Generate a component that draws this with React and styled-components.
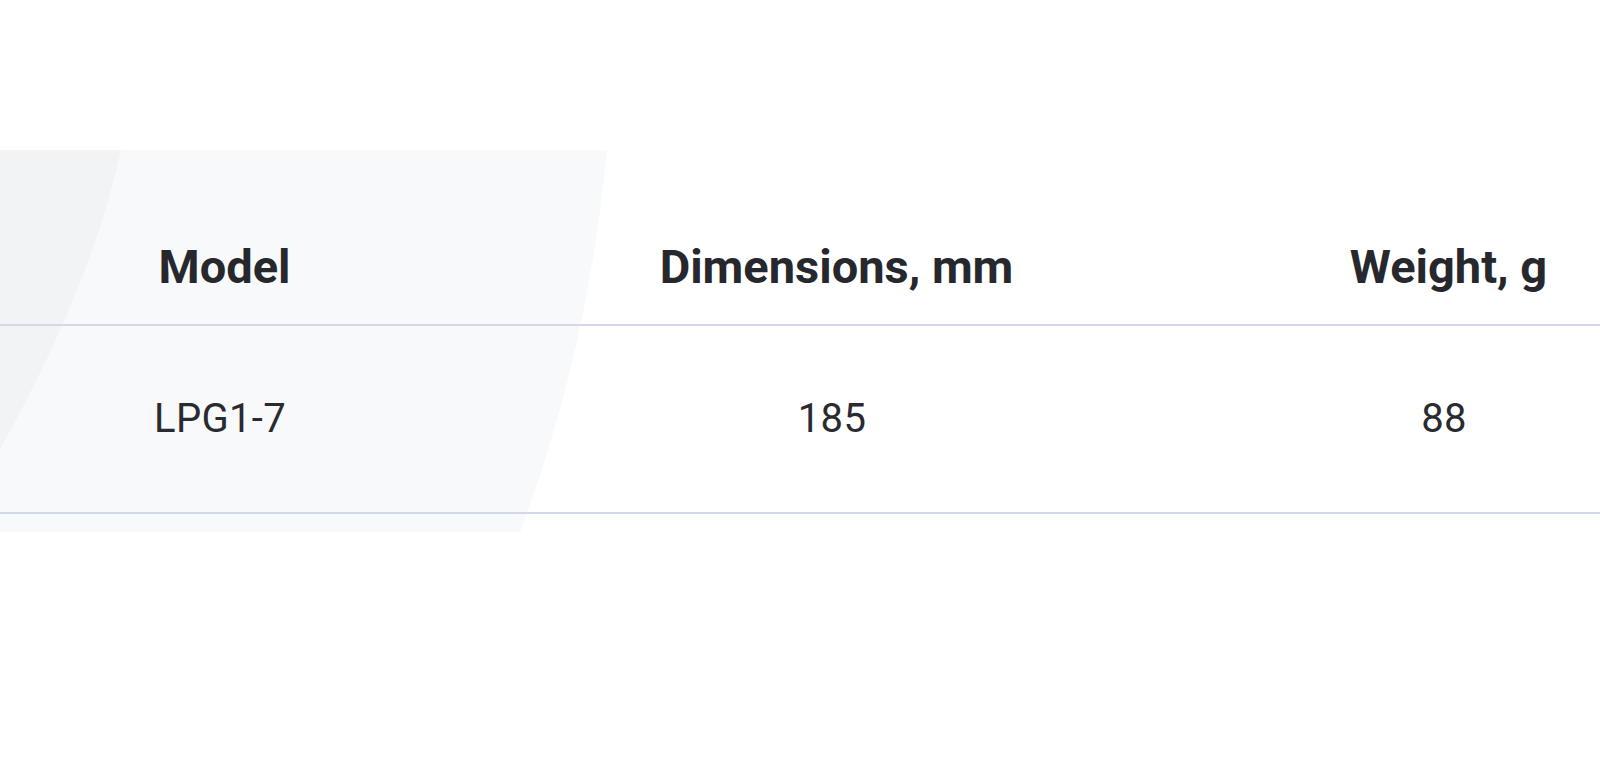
import React from "react";
import styled, { createGlobalStyle } from "styled-components";

const GlobalStyle = createGlobalStyle`
  html, body {
    margin: 0;
    padding: 0;
    background: #ffffff;
    overflow: hidden;
  }
  body {
    font-family: Roboto, "Liberation Sans", Arial, sans-serif;
    color: #26282d;
  }
`;

const Page = styled.div`
  width: 1600px;
  height: 758px;
  padding-top: 150px;
  box-sizing: border-box;
  overflow: hidden;
`;

const Section = styled.section`
  position: relative;
  height: 382px;
`;

const Backdrop = styled.svg`
  position: absolute;
  left: 0;
  top: 0;
  width: 620px;
  height: 382px;
  z-index: 0;
`;

const Table = styled.div`
  position: relative;
  z-index: 1;
  margin-left: -86px;
  width: 1836px;
  display: grid;
  grid-template-columns: repeat(3, 612px);
`;

const Row = styled.div`
  display: contents;
`;

const HeadCell = styled.div`
  height: 176px;
  box-sizing: border-box;
  display: flex;
  align-items: flex-end;
  justify-content: center;
  padding: 0 0 34px 9px;
  border-bottom: 2px solid #d2d8ea;
  font-size: 47px;
  line-height: 46px;
  font-weight: 700;
  color: #26282d;
`;

const Cell = styled.div`
  height: 188px;
  box-sizing: border-box;
  display: flex;
  align-items: center;
  justify-content: center;
  border-bottom: 2px solid #d2d8ea;
  font-size: 40px;
  line-height: 40px;
  font-weight: 400;
  letter-spacing: 0.3px;
  color: #2a2b30;
`;

const columns = ["Model", "Dimensions, mm", "Weight, g"];
const rows = [["LPG1-7", "185", "88"]];

function App() {
  return (
    <>
      <GlobalStyle />
      <Page>
        <Section>
          <Backdrop viewBox="0 0 620 382" aria-hidden="true">
            <path
              d="M0,0 L607,0 C595,127 568,255 520,382 L0,382 Z"
              fill="#f8f9fb"
            />
            <path d="M0,0 L121,0 C99,100 56,199 0,299 Z" fill="#f2f3f5" />
          </Backdrop>
          <Table>
            <Row>
              {columns.map((c) => (
                <HeadCell key={c}>{c}</HeadCell>
              ))}
            </Row>
            {rows.map((r, i) => (
              <Row key={i}>
                {r.map((v, j) => (
                  <Cell key={j}>{v}</Cell>
                ))}
              </Row>
            ))}
          </Table>
        </Section>
      </Page>
    </>
  );
}

export default App;
